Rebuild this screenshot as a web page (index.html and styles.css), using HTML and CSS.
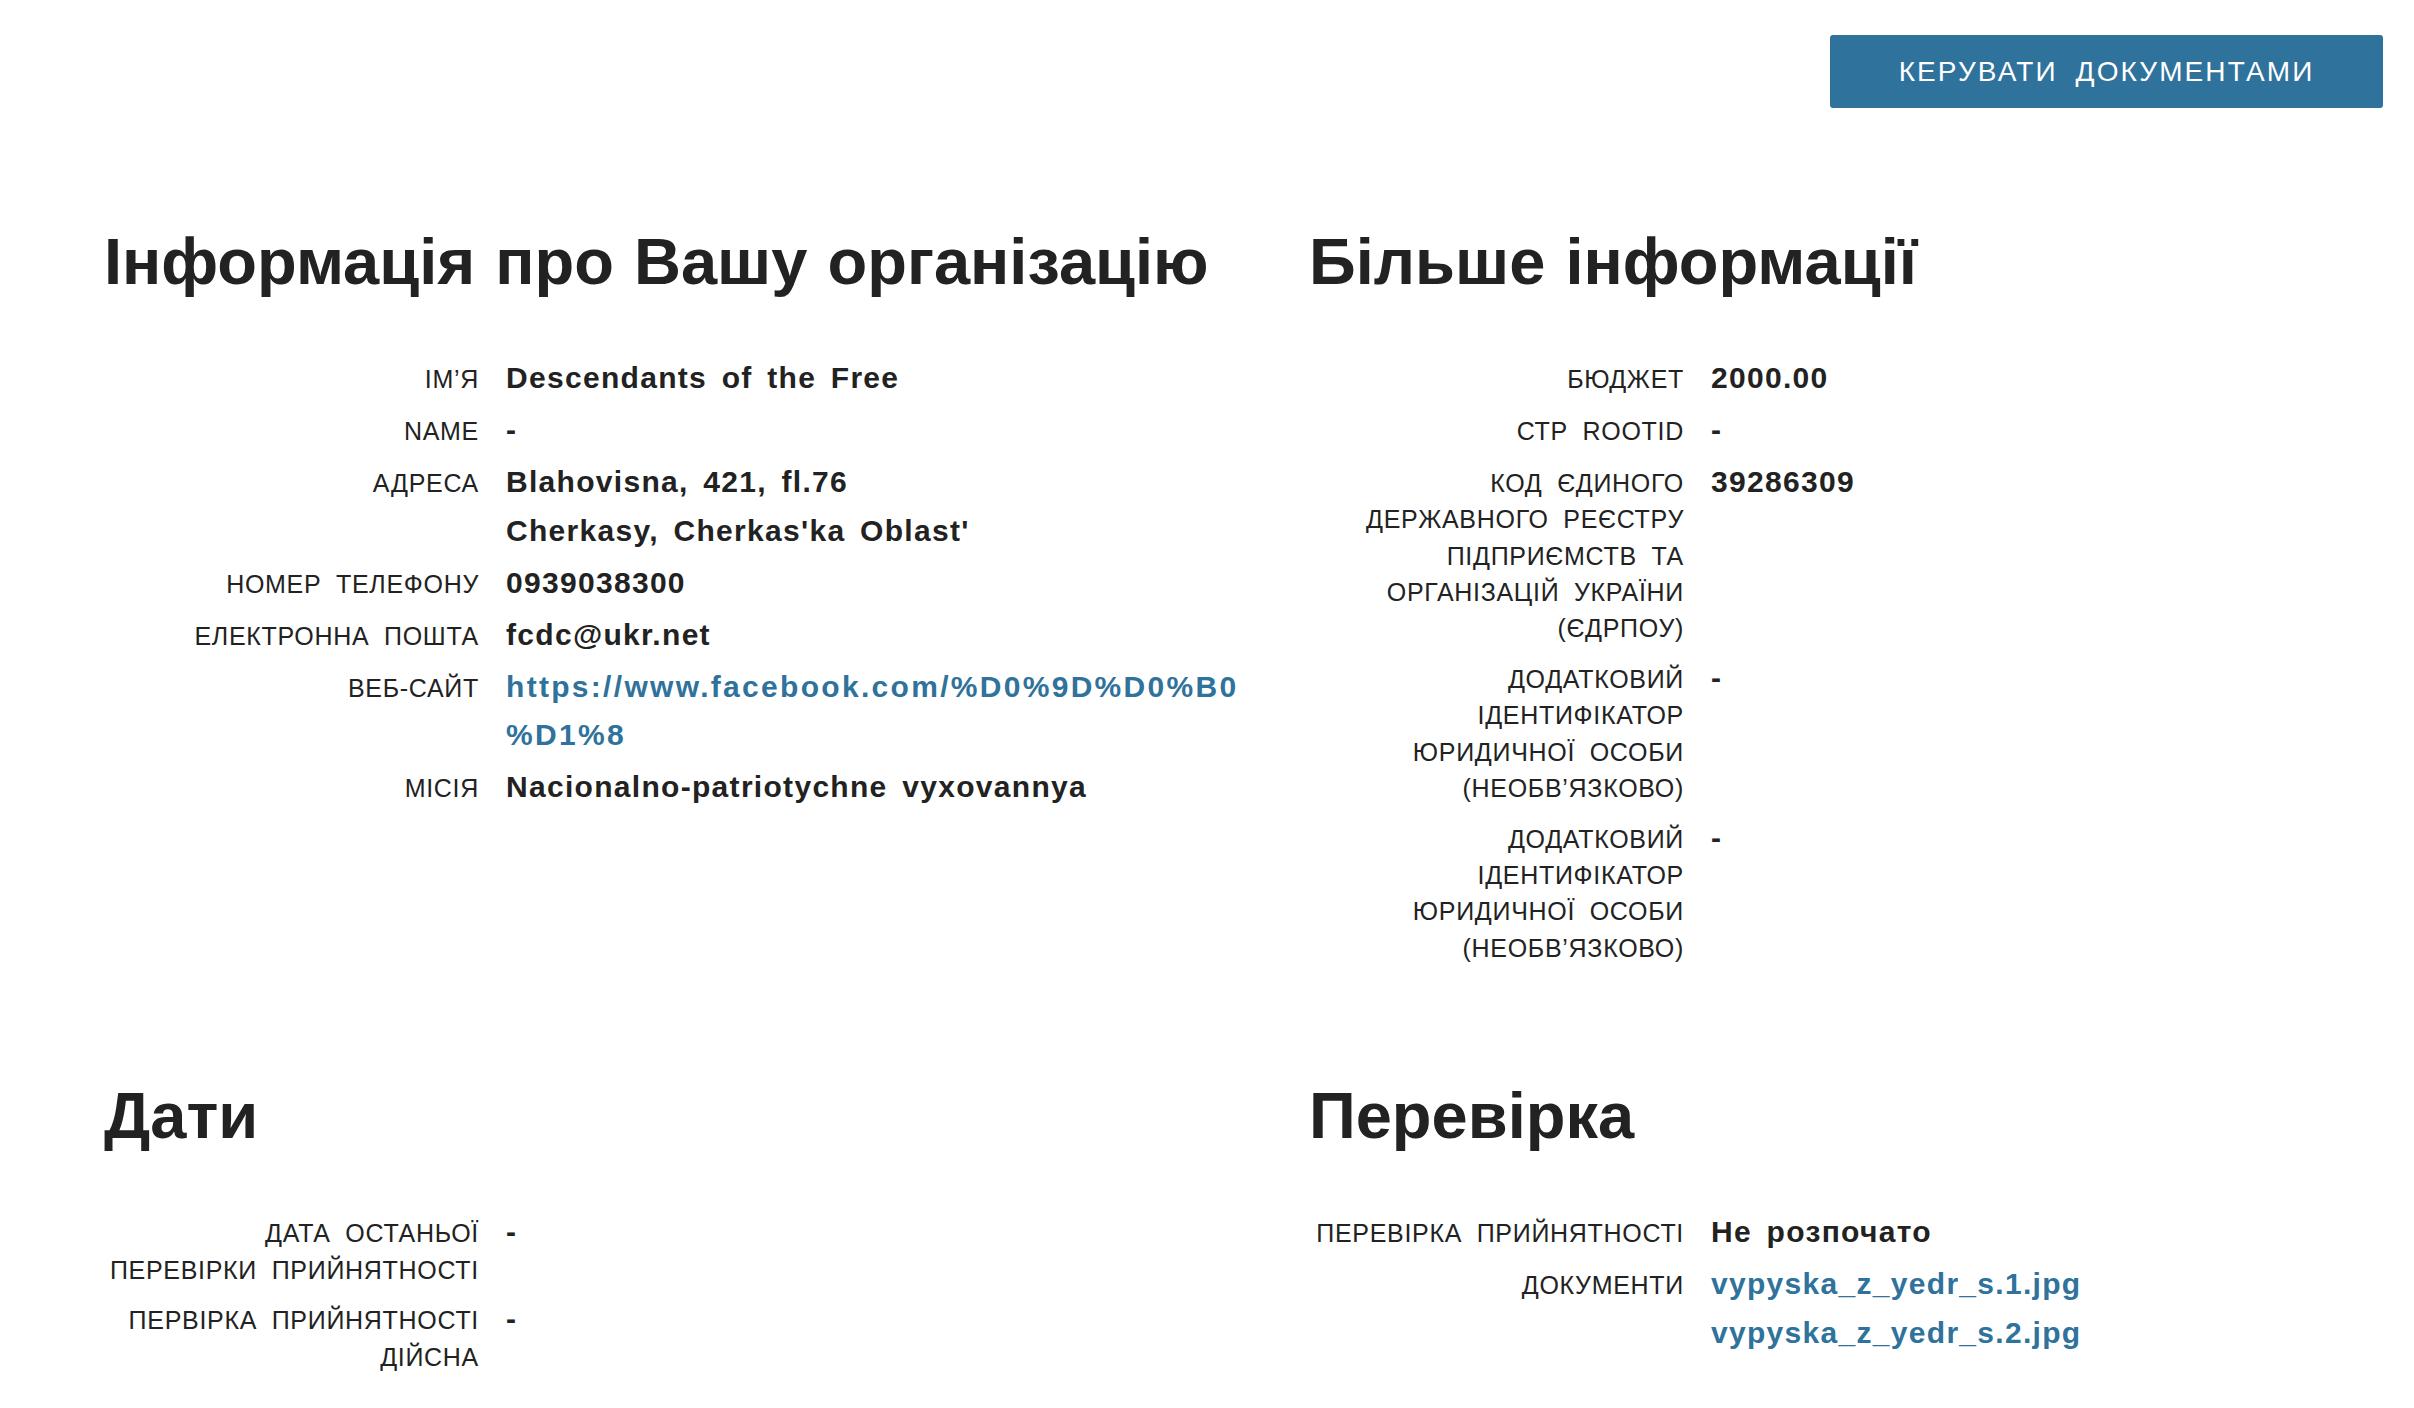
FILE: index.html
```html
<!DOCTYPE html>
<html lang="uk">
<head>
<meta charset="utf-8">
<title>Інформація про Вашу організацію</title>
<link rel="stylesheet" href="styles.css">
</head>
<body>
<header class="topbar">
  <a class="btn" href="#">Керувати документами</a>
</header>
<main class="grid">
  <section class="section">
    <h2 class="title">Інформація про Вашу організацію</h2>
    <div class="row"><div class="label">Ім’я</div><div class="value">Descendants of the Free</div></div>
    <div class="row"><div class="label">Name</div><div class="value">-</div></div>
    <div class="row"><div class="label">Адреса</div><div class="value">Blahovisna, 421, fl.76<br>Cherkasy, Cherkas'ka Oblast'</div></div>
    <div class="row"><div class="label">Номер телефону</div><div class="value">0939038300</div></div>
    <div class="row"><div class="label">Електронна пошта</div><div class="value">fcdc@ukr.net</div></div>
    <div class="row"><div class="label">Веб-сайт</div><div class="value"><a class="link url" href="#">https://www.facebook.com/%D0%9D%D0%B0<br>%D1%8</a></div></div>
    <div class="row"><div class="label">Місія</div><div class="value">Nacionalno-patriotychne vyxovannya</div></div>
  </section>
  <section class="section">
    <h2 class="title">Більше інформації</h2>
    <div class="row"><div class="label">Бюджет</div><div class="value">2000.00</div></div>
    <div class="row"><div class="label">СТР RootID</div><div class="value">-</div></div>
    <div class="row"><div class="label">Код Єдиного Державного Реєстру Підприємств та Організацій України (ЄДРПОУ)</div><div class="value">39286309</div></div>
    <div class="row"><div class="label">Додатковий ідентифікатор юридичної особи (необв’язково)</div><div class="value">-</div></div>
    <div class="row"><div class="label">Додатковий ідентифікатор юридичної особи (необв’язково)</div><div class="value">-</div></div>
  </section>
  <section class="section">
    <h2 class="title">Дати</h2>
    <div class="row"><div class="label">Дата останьої перевірки прийнятності</div><div class="value">-</div></div>
    <div class="row"><div class="label">Первірка прийнятності дійсна</div><div class="value">-</div></div>
  </section>
  <section class="section">
    <h2 class="title">Перевірка</h2>
    <div class="row"><div class="label">Перевірка прийнятності</div><div class="value">Не розпочато</div></div>
    <div class="row"><div class="label">Документи</div><div class="value"><a class="link" href="#">vypyska_z_yedr_s.1.jpg</a><br><a class="link" href="#">vypyska_z_yedr_s.2.jpg</a></div></div>
  </section>
</main>
</body>
</html>
```
FILE: styles.css
```css
html, body {
  margin: 0;
  padding: 0;
  background: #ffffff;
}
body {
  font-family: "Liberation Sans", Arial, sans-serif;
  color: #222222;
}
.topbar {
  display: flex;
  justify-content: flex-end;
  padding: 35px 31px 0 0;
}
.btn {
  display: flex;
  align-items: center;
  justify-content: center;
  width: 553px;
  height: 73px;
  box-sizing: border-box;
  background: #2f729c;
  color: #ffffff;
  border-radius: 3px;
  text-decoration: none;
  text-transform: uppercase;
  font-size: 28px;
  letter-spacing: 2.1px;
  word-spacing: 8px;
}
.grid {
  display: grid;
  grid-template-columns: 1205px 1fr;
  row-gap: 107px;
  padding: 118px 0 0 100px;
}
.title {
  margin: 0 0 56px 0;
  padding-left: 4px;
  font-size: 65px;
  line-height: 72px;
  font-weight: 700;
  word-spacing: 2px;
  color: #222222;
}
.row {
  display: grid;
  grid-template-columns: 379px 1fr;
  column-gap: 27px;
  align-items: baseline;
  margin-bottom: 3.5px;
}
.label {
  text-align: right;
  text-transform: uppercase;
  font-size: 25px;
  line-height: 36.3px;
  letter-spacing: 0.7px;
  word-spacing: 7px;
  padding: 0 0 4px 6px;
}
.value {
  font-size: 30px;
  line-height: 48.5px;
  font-weight: 700;
  letter-spacing: 1.3px;
  word-spacing: 5px;
}
.link {
  color: #2f729c;
  text-decoration: none;
}
.url {
  letter-spacing: 2.3px;
}
```
